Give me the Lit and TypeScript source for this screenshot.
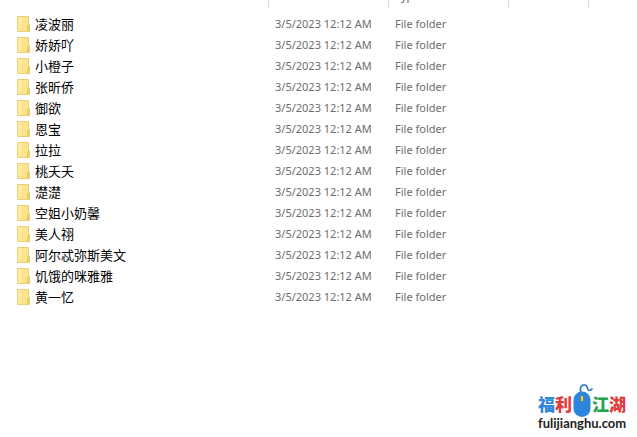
import { LitElement, html, css } from "lit";
import { customElement } from "lit/decorators.js";

const FOLDERS = [
  "凌波丽", "娇娇吖", "小橙子", "张昕侨", "御欲", "恩宝", "拉拉",
  "桃夭夭", "濋濋", "空姐小奶馨", "美人祤", "阿尔忒弥斯美文", "饥饿的咪雅雅", "黄一忆",
];

const folderIcon = () => html`<svg class="icon" viewBox="0 0 13 16" aria-hidden="true">
  <path d="M.5 .5H11.5V8L12.5 9V15.5H.5Z" fill="#fbe48b" stroke="#e9cf78"/>
  <path d="M1 1H6L3 15H1Z" fill="#fdec9f"/>
  <path d="M10.5 15V10L12 8.5V15Z" fill="#f8dc78" stroke="#e2c35e" stroke-width=".8"/>
</svg>`;

@customElement("folder-list")
export class FolderList extends LitElement {
  static styles = css`
    :host { display: block; }
    table { width: 100%; border-collapse: collapse; table-layout: fixed; }
    th, td { padding: 0; text-align: left; font-weight: 400; white-space: nowrap; }
    .name { width: 269px; }
    .date, .type { width: 120px; }
    .size { width: 80px; }
    .label {
      box-sizing: border-box; height: 24px; margin-bottom: 6px; padding-left: 6px;
      border-right: 1px solid #dedede;
      font: 11px/24px "Noto Sans", sans-serif; color: #4a4f58;
    }
    .last { border-right: 0; }
    td { height: 21px; padding-left: 6px; font: 11px/18px "Noto Sans", sans-serif; color: #6d6d6d; }
    td.file { padding-left: 17px; color: #000; font: 13px/18px "Noto Sans CJK SC", sans-serif; }
    td:not(.file) { padding-bottom: 2px; height: 19px; }
    .entry { display: flex; align-items: center; gap: 5px; height: 18px; padding-bottom: 2px; }
    .icon { width: 13px; height: 16px; flex: none; }
  `;
  render() {
    return html`<table>
      <thead><tr>
        <th class="name"><div class="label"></div></th>
        <th class="date"><div class="label"></div></th>
        <th class="type"><div class="label">Type</div></th>
        <th class="size"><div class="label"></div></th>
        <th><div class="label last"></div></th>
      </tr></thead>
      <tbody>${FOLDERS.map((name) => html`<tr>
        <td class="file"><div class="entry">${folderIcon()}<span>${name}</span></div></td>
        <td>3/5/2023 12:12 AM</td>
        <td>File folder</td>
        <td></td><td></td>
      </tr>`)}</tbody>
    </table>`;
  }
}

@customElement("site-mark")
export class SiteMark extends LitElement {
  static styles = css`
    :host { display: block; width: 88px; }
    .top { display: flex; align-items: flex-end; justify-content: space-between; height: 33px; }
    .word {
      margin-bottom: 4px; font: 900 17px/18px "Noto Sans CJK SC", sans-serif;
      white-space: nowrap;
    }
    .blue { color: #2f86dc; }
    .red { color: #e5393c; }
    .green { color: #20a34b; }
    .mouse { width: 20px; height: 33px; flex: none; }
    .domain { font: 700 13px/12px "Lato", sans-serif; color: #222; text-align: center; white-space: nowrap; }
  `;
  render() {
    return html`<div class="top">
        <span class="word"><span class="blue">福</span><span class="red">利</span></span>
        <svg class="mouse" viewBox="0 0 20 33" overflow="visible" aria-hidden="true">
          <path d="M9 9C7 3 10 .5 13 1C16.500 1.500 14.500 6 17 6.500Q19 6.500 20.500 4.500" fill="none" stroke="#2a78c8" stroke-width="1.6"/>
          <rect x="1.500" y="7.500" width="17" height="25.500" rx="8.500" fill="#2c86de"/>
          <rect x="8.500" y="11.500" width="3" height="6" rx="1" fill="#f0c93a" stroke="#23629f" stroke-width=".5"/>
        </svg>
        <span class="word"><span class="green">江</span><span class="red">湖</span></span>
      </div>
      <div class="domain">fulijianghu.com</div>`;
  }
}

@customElement("app-root")
export class AppRoot extends LitElement {
  static styles = css`
    :host { display: block; position: relative; min-height: 100vh; background: #fff; overflow: hidden; }
    folder-list { margin-top: -16px; }
    site-mark { position: absolute; right: 11px; bottom: 8px; }
  `;
  render() {
    return html`<folder-list></folder-list><site-mark></site-mark>`;
  }
}
